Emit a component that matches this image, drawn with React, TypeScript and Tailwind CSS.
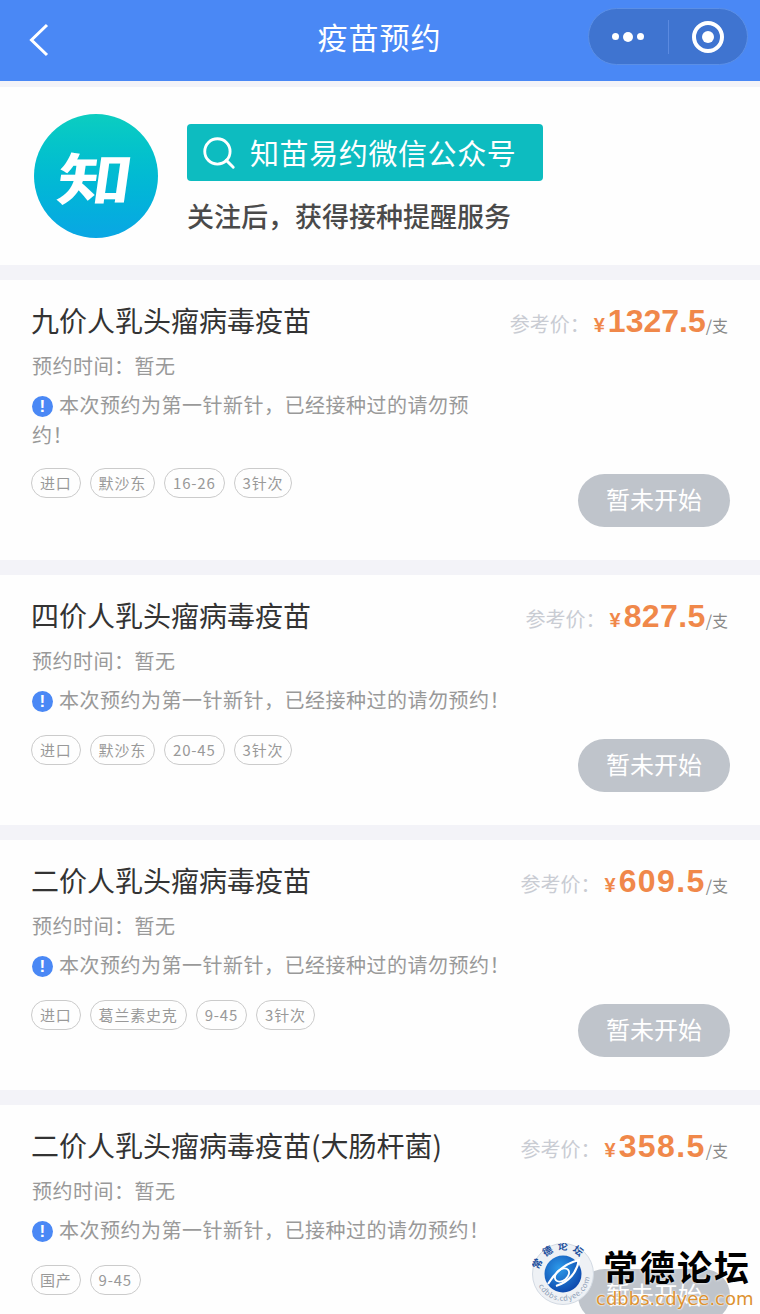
import { Search } from 'lucide-react'

interface Vaccine {
  name: string
  price: string
  priceClass: string
  notice: string
  tags: string[]
  tall?: boolean
}

const NOTICE_A = '本次预约为第一针新针，已经接种过的请勿预约！'
const NOTICE_B = '本次预约为第一针新针，已接种过的请勿预约！'

const VACCINES: Vaccine[] = [
  { name: '九价人乳头瘤病毒疫苗', price: '1327.5', priceClass: 'tracking-[0px]', notice: NOTICE_A, tags: ['进口', '默沙东', '16-26', '3针次'], tall: true },
  { name: '四价人乳头瘤病毒疫苗', price: '827.5', priceClass: 'tracking-[0.4px]', notice: NOTICE_A, tags: ['进口', '默沙东', '20-45', '3针次'] },
  { name: '二价人乳头瘤病毒疫苗', price: '609.5', priceClass: 'tracking-[1.4px]', notice: NOTICE_A, tags: ['进口', '葛兰素史克', '9-45', '3针次'] },
  { name: '二价人乳头瘤病毒疫苗(大肠杆菌)', price: '358.5', priceClass: 'tracking-[1.4px]', notice: NOTICE_B, tags: ['国产', '9-45'] },
]

function VaccineCard({ item }: { item: Vaccine }) {
  return (
    <div className={`mt-[15px] flex gap-2 bg-[#fefefe] pl-[32px] pr-[30px] pt-[20px] pb-[33px] ${item.tall ? 'h-[280px]' : 'h-[250px]'}`}>
      <div className="min-w-0 flex-1">
        <div className="-ml-[1px] text-[28px] leading-[40px] text-[#333]">{item.name}</div>
        <div className="mt-[12px] text-[20px] leading-[28px] tracking-[0.5px] text-[#999]">预约时间：暂无</div>
        <div className="mt-[11px] text-[20px] leading-[28px] tracking-[0.5px] text-[#999]">
          <span className="mr-[6px] inline-flex h-[21px] w-[21px] -translate-y-[4px] items-center justify-center rounded-full bg-[#4a88f5] align-[-3px] font-['Liberation_Sans',sans-serif] text-[17px] font-bold leading-none text-white">
            !
          </span>
          {item.notice}
        </div>
        <div className="-ml-[1px] mt-[19px] flex gap-[9px]">
          {item.tags.map(tag => (
            <span
              key={tag}
              className="flex h-[30px] items-center rounded-full border border-[#cbcbcb] px-[8px] text-[15px] tracking-[0.8px] text-[#999]"
            >
              {tag}
            </span>
          ))}
        </div>
      </div>
      <div className="flex shrink-0 flex-col items-end justify-between">
        <div className="mr-[2px] mt-[1px] flex items-baseline whitespace-nowrap">
          <span className="mr-[4px] text-[20px] text-[#c9ccd3]">参考价：</span>
          <span className="mr-[3px] font-['Liberation_Sans',sans-serif] text-[20px] font-bold text-[#f0884a]">¥</span>
          <span className={`font-['Liberation_Sans',sans-serif] text-[32px] font-bold leading-[40px] text-[#f0884a] ${item.priceClass}`}>{item.price}</span>
          <span className="text-[16px] text-[#888]">/支</span>
        </div>
        <button className="flex h-[53px] w-[152px] items-center justify-center rounded-full bg-[#bfc4cb] pb-[4px] text-[24px] text-white">
          暂未开始
        </button>
      </div>
    </div>
  )
}

function Watermark() {
  return (
    <div className="absolute left-[532px] top-[1243px] flex items-start">
      <svg width="62" height="62" viewBox="0 0 62 62" className="shrink-0">
        <defs>
          <path id="wm-top" d="M7 31a24 24 0 0 1 48 0" />
          <path id="wm-bottom" d="M4 31a27 27 0 0 0 54 0" />
          <radialGradient id="wm-ball" cx="0.4" cy="0.35" r="0.75">
            <stop offset="0" stopColor="#2d9bea" />
            <stop offset="1" stopColor="#0a3fa6" />
          </radialGradient>
        </defs>
        <circle cx="31" cy="31" r="30.5" fill="#eef1f5" stroke="#d3dae3" />
        <circle cx="31" cy="31" r="18.5" fill="url(#wm-ball)" />
        <path d="M16 41C24 28 34 20 47 17C45 29 37 39 24 43" fill="none" stroke="#fff" strokeWidth="2.2" />
        <ellipse cx="30" cy="32" rx="8" ry="5.5" fill="none" stroke="#fff" strokeWidth="1.8" transform="rotate(-40 30 32)" />
        <text fontSize="10" fontWeight="700" fill="#1c4f9c" letterSpacing="4">
          <textPath href="#wm-top" startOffset="4">常德论坛</textPath>
        </text>
        <text fontSize="7.5" fill="#8fa0b5" letterSpacing="0.6">
          <textPath href="#wm-bottom" startOffset="12">cdbbs.cdyee.com</textPath>
        </text>
      </svg>
      <div className="ml-[2px] flex flex-col">
        <div className="ml-[7px] text-[35px] font-bold leading-[45px] tracking-[2px] whitespace-nowrap text-black [text-shadow:0_0_3px_#fff]">
          常德论坛
        </div>
        <div className="font-['DejaVu_Sans',sans-serif] text-[18px] leading-[22px] whitespace-nowrap text-[#dd9230] [text-shadow:0_0_2px_#fff,0_0_2px_#fff]">
          cdbbs.cdyee.com
        </div>
      </div>
    </div>
  )
}

export default function App() {
  return (
    <div lang="zh-CN" className="relative h-[1314px] overflow-hidden bg-[#f3f3f8] font-['Noto_Sans_CJK_SC',sans-serif]">
      {/* Nav bar */}
      <div className="flex h-[81px] items-center justify-between bg-[#4a88f5] pl-[29px] pr-[12px] pb-[8px]">
        <div className="flex-1">
          <svg width="20" height="34" viewBox="0 0 20 34" className="mt-[7px]" fill="none" stroke="#fff" strokeWidth="3">
            <path d="M18 2 2.5 17 18 32" />
          </svg>
        </div>
        <div className="-ml-[18px] text-[30px] tracking-[1px] text-white">疫苗预约</div>
        <div className="flex flex-1 justify-end">
          <div className="flex h-[57px] w-[160px] items-center rounded-full border border-[#5b8fe6] bg-[#3f74d0]">
            <div className="flex h-[34px] flex-1 items-center justify-center gap-[4px] border-r border-[#5b8ae0]">
              <span className="h-[7px] w-[7px] rounded-full bg-white" />
              <span className="h-[10px] w-[10px] rounded-full bg-white" />
              <span className="h-[7px] w-[7px] rounded-full bg-white" />
            </div>
            <div className="flex flex-1 items-center justify-center">
              <span className="flex h-[32px] w-[32px] items-center justify-center rounded-full border-[4px] border-white">
                <span className="h-[12px] w-[12px] rounded-full bg-white" />
              </span>
            </div>
          </div>
        </div>
      </div>

      {/* Follow banner */}
      <div className="mt-[6px] flex h-[178px] items-center gap-[29px] bg-[#fefefe] pl-[34px]">
        <div className="flex h-[124px] w-[124px] items-center justify-center rounded-full bg-gradient-to-b from-[#0ccdc0] to-[#0aa6e4]">
          <span className="-skew-x-6 scale-x-[1.35] text-[56px] leading-none font-bold text-white">知</span>
        </div>
        <div className="mt-[8px]">
          <div className="flex h-[57px] w-[356px] items-center gap-[12px] rounded-[4px] bg-[#0dbcc0] pl-[13px]">
            <Search size={38} strokeWidth={1.8} color="#fff" />
            <span className="text-[29px] tracking-[0.6px] text-white">知苗易约微信公众号</span>
          </div>
          <div className="mt-[15px] text-[27px] leading-[40px] font-medium text-[#4a4a4a]">关注后，获得接种提醒服务</div>
        </div>
      </div>

      {VACCINES.map(item => (
        <VaccineCard key={item.name} item={item} />
      ))}

      <Watermark />
    </div>
  )
}
